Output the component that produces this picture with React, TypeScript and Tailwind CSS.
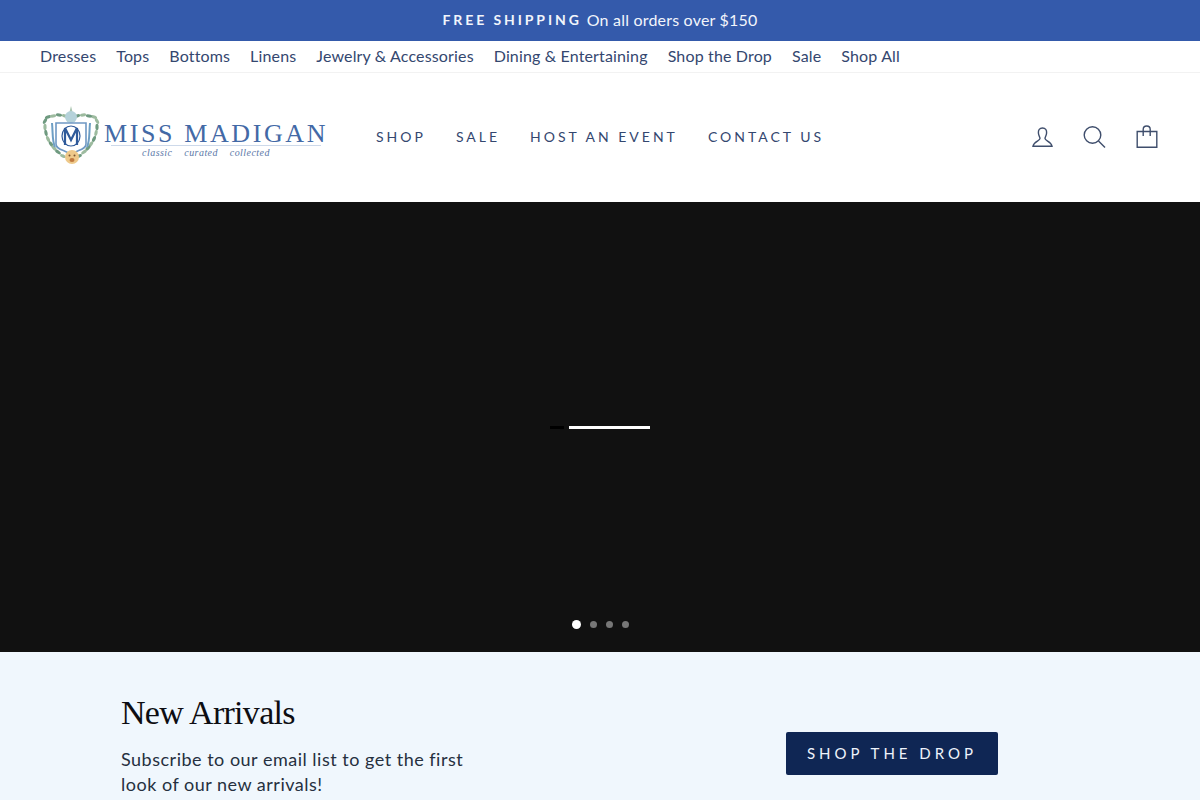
const body = { fontFamily: 'Lato, "Noto Sans", sans-serif' };
const serif = { fontFamily: '"Liberation Serif", serif' };
const subnav = ["Dresses", "Tops", "Bottoms", "Linens", "Jewelry & Accessories", "Dining & Entertaining", "Shop the Drop", "Sale", "Shop All"];
const mainnav = ["SHOP", "SALE", "HOST AN EVENT", "CONTACT US"];

const leftLeaves: [number, number, number][] = [
  [8, 14, -20], [13, 13, -10], [19, 12, 10], [25, 13, 20], [5, 18, -60], [5, 24, -90], [6, 30, 80],
  [8, 36, 65], [11, 41, 55], [14, 45, 45], [18, 49, 35], [23, 53, 25],
];

function Crest() {
  return (
    <svg width="64" height="66" viewBox="0 0 64 66" className="shrink-0">
      {leftLeaves.map(([x, y, r], i) => (
        <g key={i}>
          <ellipse cx={x} cy={y} rx="3.2" ry="1.6" fill={i % 2 ? "#9dbb9f" : "#6f9a80"} transform={`rotate(${r} ${x} ${y})`} />
          <ellipse cx={64 - x - 2} cy={y} rx="3.2" ry="1.6" fill={i % 2 ? "#6f9a80" : "#9dbb9f"} transform={`rotate(${-r} ${64 - x - 2} ${y})`} />
        </g>
      ))}
      <path d="M31 3L33 11H29Z" fill="#a9c4b0" />
      <circle cx="31" cy="14" r="6" fill="#b5d2da" />
      <path d="M16 20H46V41C46 47 36 47 31 52C26 47 16 47 16 41Z" fill="#fff" stroke="#6f98c4" strokeWidth="1.6" />
      <path d="M12 20C13 30 12 38 15 44M50 20C49 30 50 38 47 44" fill="none" stroke="#6d9ec4" strokeWidth="2" />
      <g fill="none" stroke="#2f5a9a" strokeWidth="2.2">
        <path d="M25 42V25L31 37L37 25V42" />
        <ellipse cx="31" cy="33" rx="9" ry="10" strokeWidth="1.2" />
      </g>
      <circle cx="32" cy="54" r="7" fill="#eec98a" />
      <circle cx="29.5" cy="52.5" r="1" fill="#7a5230" />
      <circle cx="34.5" cy="52.5" r="1" fill="#7a5230" />
      <ellipse cx="32" cy="57" rx="2.5" ry="2" fill="#c0793f" />
    </svg>
  );
}

export default function App() {
  return (
    <div className="w-[1200px] h-[800px] overflow-hidden bg-white text-[#0f2453]" style={body}>
      <div className="h-[41px] pb-[2px] bg-[#345aab] flex items-center justify-center text-[#f2f5fb] text-[16px] tracking-[0.2px]">
        <span className="font-bold text-[14px] tracking-[2.9px] mr-[5px]">FREE SHIPPING</span>
        <span>On all orders over $150</span>
      </div>
      <nav className="h-[32px] pb-[2px] border-b border-[#f2f2f2] pl-[40px] flex items-center gap-[20px] text-[16px] text-[#34476f] tracking-[0.15px]">
        {subnav.map((s) => (
          <span key={s}>{s}</span>
        ))}
      </nav>
      <header className="h-[129px] flex items-center pl-[40px] pr-[41px]">
        <div className="w-[336px] flex items-center gap-[1px] -mt-[3px]">
          <Crest />
          <div className="flex flex-col items-center w-[222px] pt-[8px]">
            <span className="text-[26px] leading-[23px] tracking-[2.6px] text-[#4369a6] whitespace-nowrap" style={serif}>MISS MADIGAN</span>
            <div className="h-px w-[210px] bg-[#cdd9ea]" />
            <span className="mr-[20px] text-[10px] leading-[13px] italic tracking-[0.45px] text-[#5c79a8] whitespace-pre" style={serif}>classic    curated    collected</span>
          </div>
        </div>
        <div className="flex gap-[30px] text-[14px] tracking-[3px] text-[#34476f] -mt-[3px]">
          {mainnav.map((s) => (
            <span key={s}>{s}</span>
          ))}
        </div>
        <div className="ml-auto -mt-[1px] flex items-center gap-[28px] text-[#3f4e6c]">
          <svg width="24" height="24" viewBox="0 0 24 24" fill="none" stroke="currentColor" strokeWidth="1.4">
            <path d="M11.5 3C8.5 3 7.2 5.2 7.4 8C7.6 10.6 9 12.2 9 13.6C9 15.8 3 16 2 21.2H21C20 16 14 15.8 14 13.6C14 12.2 15.4 10.6 15.6 8C15.8 5.2 14.5 3 11.5 3Z" />
          </svg>
          <svg width="24" height="24" viewBox="0 0 24 24" fill="none" stroke="currentColor" strokeWidth="1.4">
            <circle cx="9.5" cy="10" r="8.3" />
            <path d="M15.5 16L22 22.5" />
          </svg>
          <svg width="24" height="24" viewBox="0 0 24 24" fill="none" stroke="currentColor" strokeWidth="1.4">
            <path d="M2.2 6.5H21.8V22.3H2.2Z" />
            <path d="M8.2 11V4.5C8.2 2.5 9.8 1 11.7 1S15.2 2.5 15.2 4.5V11" />
          </svg>
        </div>
      </header>
      <section className="relative h-[450px] bg-[#111111] flex items-center justify-center">
        <div className="flex w-[100px] h-[3px] mt-[1px]">
          <div className="w-[14px] bg-black" />
          <div className="w-[5px]" />
          <div className="w-[81px] bg-white" />
        </div>
        <div className="absolute bottom-[23px] left-[572px] flex items-center gap-[9px]">
          <div className="w-[9px] h-[9px] rounded-full bg-white" />
          <div className="w-[7px] h-[7px] rounded-full bg-[#777777]" />
          <div className="w-[7px] h-[7px] rounded-full bg-[#777777]" />
          <div className="w-[7px] h-[7px] rounded-full bg-[#777777]" />
        </div>
      </section>
      <section className="h-[148px] bg-[#f0f7fd] pl-[121px] flex">
        <div className="w-[380px] pt-[40px] text-[#26303f]">
          <h2 className="text-[34px] leading-[42px] tracking-[-0.7px] text-[#0d0d12]" style={serif}>New Arrivals</h2>
          <p className="mt-[13px] text-[18px] leading-[25px] tracking-[0.5px]">Subscribe to our email list to get the first look of our new arrivals!</p>
        </div>
        <div className="ml-[285px] pt-[80px]">
          <div className="w-[212px] h-[43px] rounded-[2px] bg-[#0f2654] text-[#eef3fb] flex items-center justify-center text-[15px] tracking-[4px]">SHOP THE DROP</div>
        </div>
      </section>
    </div>
  );
}
